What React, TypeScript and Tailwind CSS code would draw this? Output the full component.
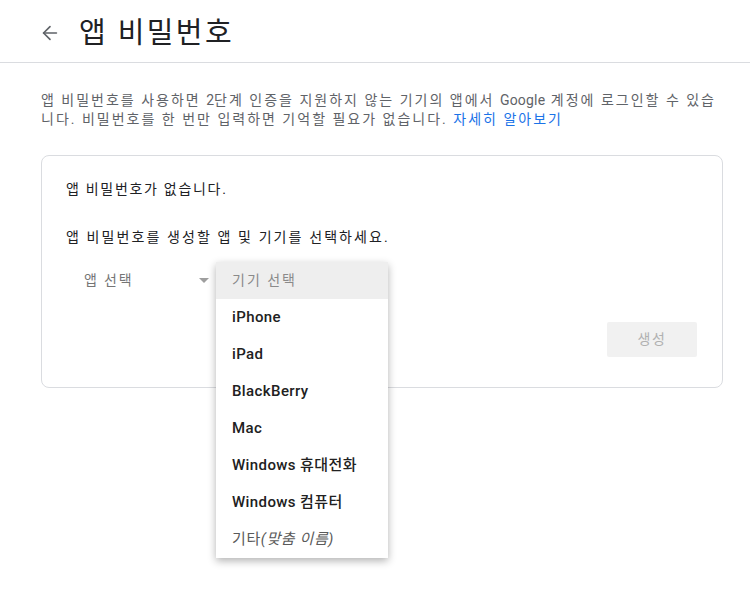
import { ArrowLeft } from "lucide-react";

const devices = ["iPhone", "iPad", "BlackBerry", "Mac", "Windows 휴대전화", "Windows 컴퓨터"];

export default function App() {
  return (
    <div
      className="relative w-[750px] h-[591px] bg-white overflow-hidden text-[#202124]"
      style={{ fontFamily: "Roboto, 'Noto Sans CJK KR', sans-serif" }}
    >
      <header className="flex items-center h-[63px] border-b border-[#dadce0] pl-[39px] pt-[4px]">
        <ArrowLeft className="w-[22px] h-[22px] text-[#5f6368]" strokeWidth={1.8} />
        <h1 className="ml-[18px] text-[29px] leading-none font-normal tracking-[2.4px]">앱 비밀번호</h1>
      </header>

      <main className="px-[41px] pt-[28px]">
        <p className="text-[14px] leading-[19px] text-[#5f6368] tracking-[2px]">
          <span className="block whitespace-nowrap">
            앱 비밀번호를 사용하면 <span className="tracking-normal">2</span>단계 인증을 지원하지 않는 기기의 앱에서{" "}
            <span className="tracking-[0.2px]">Google</span> 계정에 로그인할 수 있습
          </span>
          <span className="block whitespace-nowrap">
            니다. 비밀번호를 한 번만 입력하면 기억할 필요가 없습니다.{" "}
            <a className="text-[#1a73e8]">자세히 알아보기</a>
          </span>
        </p>

        <section className="mt-[26px] w-[682px] h-[233px] border border-[#dadce0] rounded-[8px] px-[24px] pt-[23px]">
          <p className="text-[14px] leading-[20px] tracking-[1.7px]">앱 비밀번호가 없습니다.</p>
          <p className="mt-[28px] text-[14px] leading-[20px] tracking-[2.1px]">앱 비밀번호를 생성할 앱 및 기기를 선택하세요.</p>

          <div className="mt-[15px] flex items-center h-[36px] w-[150px] pl-[18px]">
            <span className="text-[14px] text-[#757575] tracking-[1.8px]">앱 선택</span>
            <span className="ml-auto mr-[7px] w-0 h-0 border-l-[5px] border-r-[5px] border-t-[5px] border-l-transparent border-r-transparent border-t-[#9e9e9e]" />
          </div>

          <div className="flex justify-end pr-[1px] mt-[24px]">
            <button className="w-[90px] h-[35px] bg-[#f1f1f1] text-[14px] text-[#b0b0b0] tracking-[1.5px] rounded-[2px]">생성</button>
          </div>
        </section>
      </main>

      <div className="absolute left-[216px] top-[262px] w-[172px] bg-white shadow-[0_3px_8px_rgba(0,0,0,0.3)]">
        <div className="h-[37px] flex items-center px-[16px] bg-[#eeeeee] text-[14px] text-[#8a8a8a] tracking-[2px]">기기 선택</div>
        {devices.map((d) => (
          <div key={d} className="h-[37px] flex items-center px-[16px] text-[15px] font-medium text-[#212121] tracking-[0.4px]">
            {d}
          </div>
        ))}
        <div className="h-[37px] flex items-center px-[16px] text-[15px] text-[#5a5a5a] tracking-[0.6px]">
          기타<i>(맞춤 이름)</i>
        </div>
      </div>
    </div>
  );
}
